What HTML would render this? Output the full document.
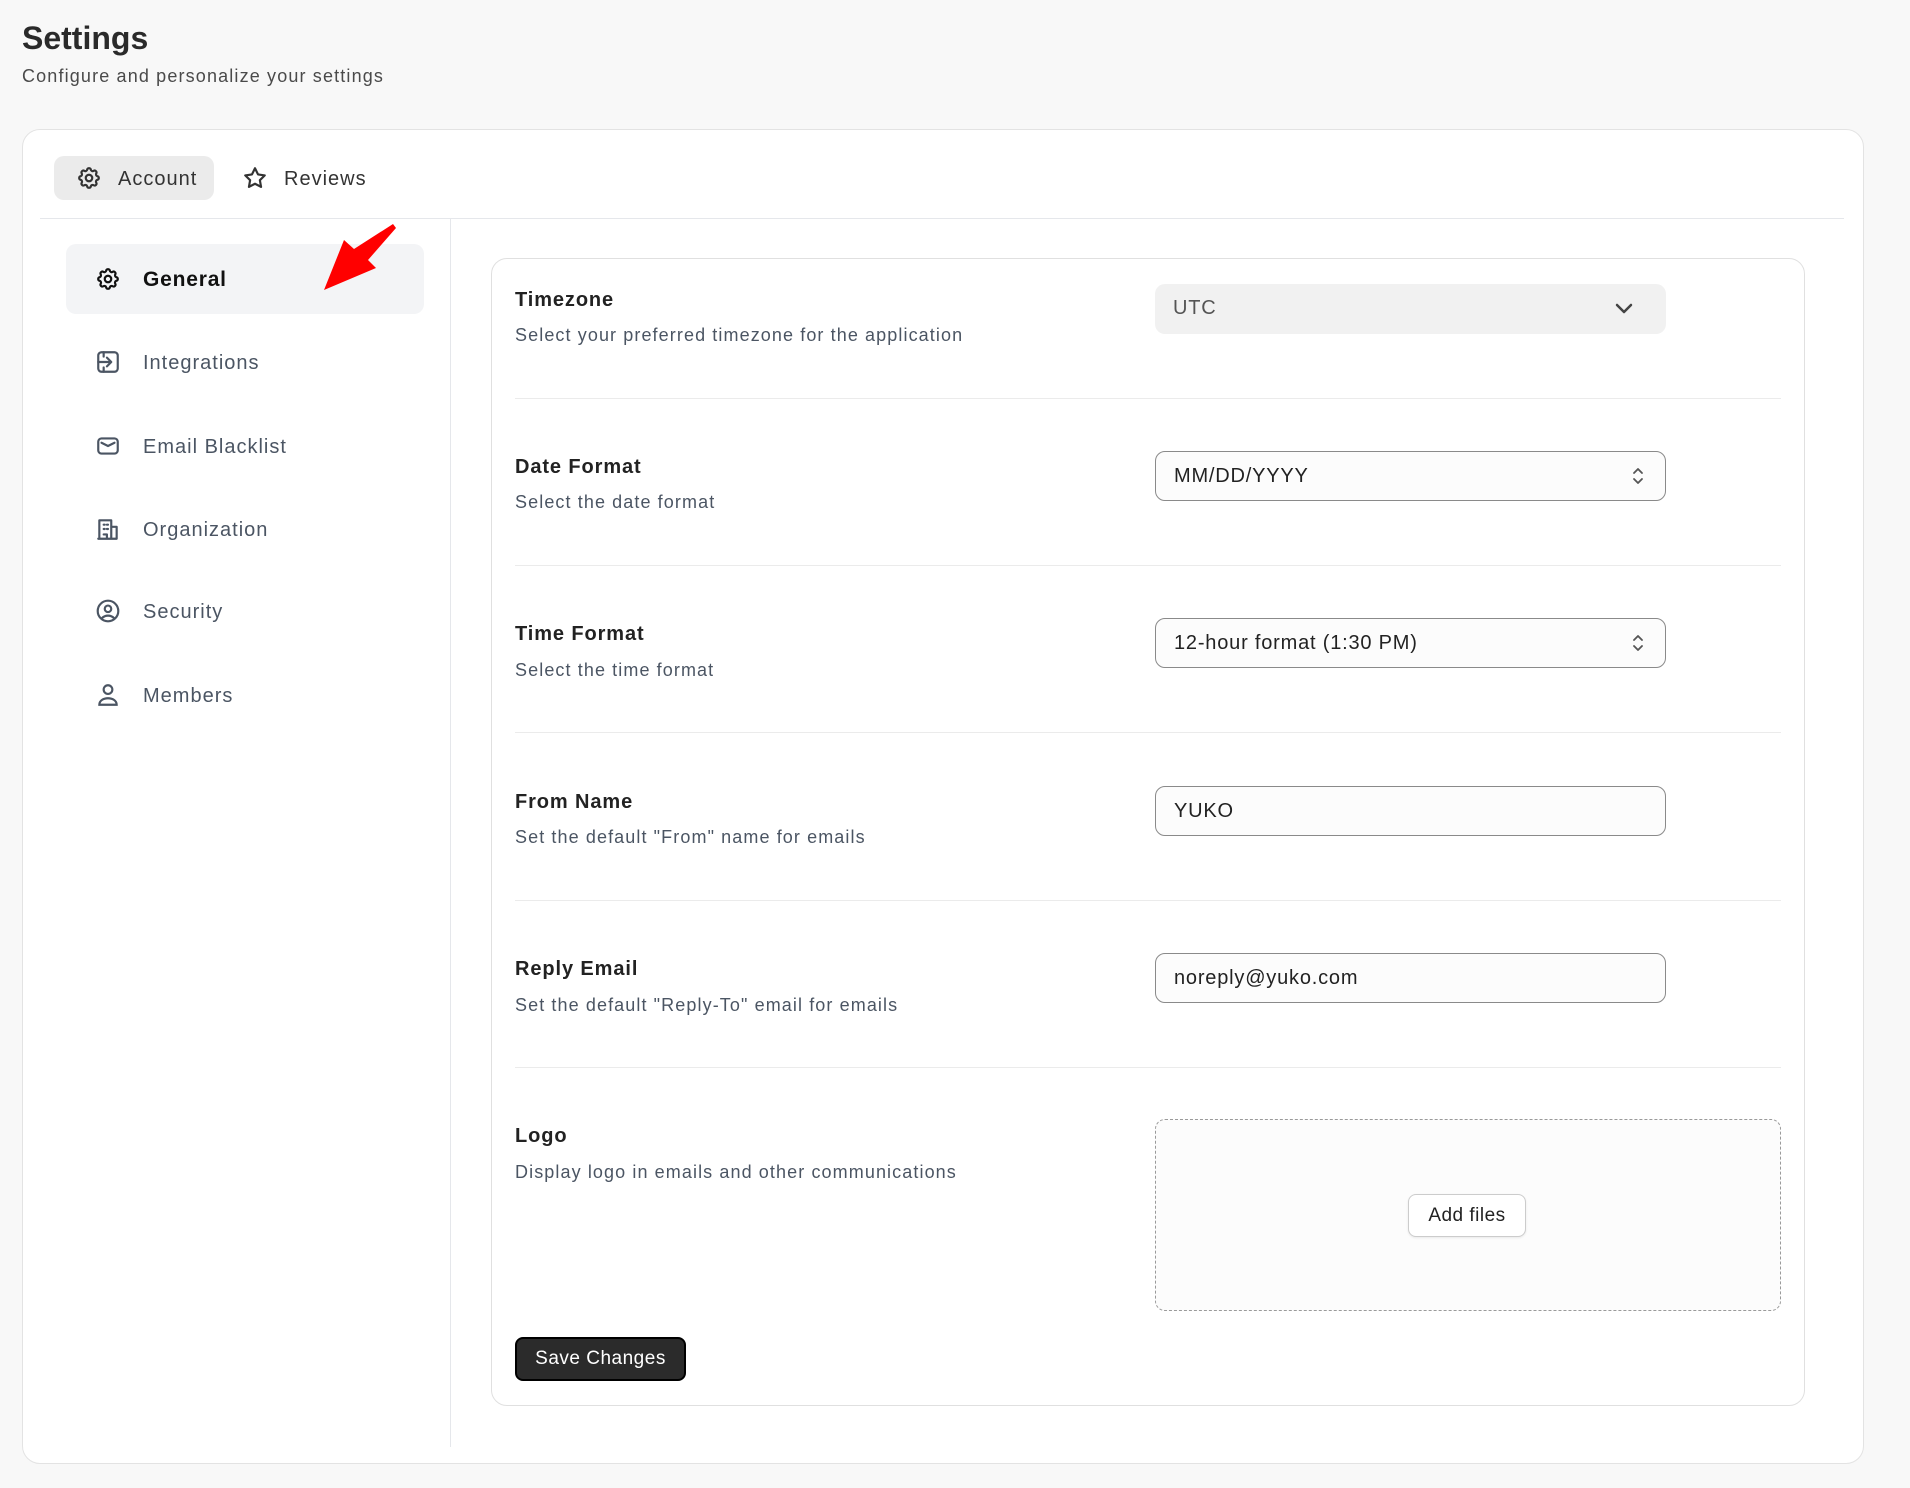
<!DOCTYPE html>
<html><head><meta charset="utf-8"><style>
*{box-sizing:border-box;margin:0;padding:0}
body{width:1910px;height:1488px;background:#f8f8f8;font-family:"Liberation Sans",sans-serif;position:relative;overflow:hidden;color:#1f2937}
.a{position:absolute}
.card{left:22px;top:129px;width:1842px;height:1335px;background:#fff;border:1px solid #e3e3e3;border-radius:18px}
.lbl{font-weight:bold;font-size:20px;color:#222;left:515px;letter-spacing:0.9px}
.desc{font-size:18px;color:#4b5563;left:515px;letter-spacing:1.1px}
.div{left:515px;width:1266px;height:1px;background:#ebebeb}
.inp{left:1155px;width:511px;height:50px;border:1px solid #8a8a8a;border-radius:10px;background:#fcfcfc;font-size:20px;color:#222;padding:13px 0 0 18px;letter-spacing:0.8px}
.nav{left:143px;font-size:20px;color:#4b5563;letter-spacing:1px}
.ic{left:95px}
</style></head><body>
<div class="a" style="left:22px;top:20px;font-size:32px;font-weight:bold;color:#2a2a2a">Settings</div>
<div class="a" style="left:22px;top:66px;font-size:18px;color:#4a4a4a;letter-spacing:1.15px">Configure and personalize your settings</div>
<div class="a card"></div>
<div class="a" style="left:54px;top:156px;width:160px;height:44px;background:#ebebeb;border-radius:10px"></div>
<svg class="a" style="left:76px;top:165px" width="26" height="26" viewBox="0 0 24 24" fill="none" stroke="#333" stroke-width="2" stroke-linejoin="round"><path d="M10.3 4.3c.4-1.8 3-1.8 3.4 0a1.7 1.7 0 0 0 2.6 1.1c1.5-.9 3.3.8 2.4 2.4a1.7 1.7 0 0 0 1 2.5c1.8.4 1.8 3 0 3.4a1.7 1.7 0 0 0-1 2.6c.9 1.5-.9 3.3-2.4 2.4a1.7 1.7 0 0 0-2.6 1c-.4 1.8-3 1.8-3.4 0a1.7 1.7 0 0 0-2.6-1c-1.5.9-3.3-.9-2.4-2.4a1.7 1.7 0 0 0-1-2.6c-1.8-.4-1.8-3 0-3.4a1.7 1.7 0 0 0 1-2.5c-.9-1.6.9-3.3 2.4-2.4a1.7 1.7 0 0 0 2.6-1.1z"/><circle cx="12" cy="12" r="3"/></svg>
<div class="a" style="left:118px;top:168px;font-size:20px;color:#333;letter-spacing:1px">Account</div>
<svg class="a" style="left:242px;top:165px" width="26" height="26" viewBox="0 0 24 24" fill="none" stroke="#333" stroke-width="2" stroke-linejoin="round"><path d="M12 3l2.8 5.7 6.2.9-4.5 4.4 1.1 6.2L12 17.3l-5.6 2.9 1.1-6.2L3 9.6l6.2-.9z"/></svg>
<div class="a" style="left:284px;top:168px;font-size:20px;color:#333;letter-spacing:1px">Reviews</div>
<div class="a" style="left:40px;top:218px;width:1804px;height:1px;background:#e5e7eb"></div>
<div class="a" style="left:450px;top:219px;width:1px;height:1228px;background:#e5e7eb"></div>

<div class="a" style="left:66px;top:244px;width:358px;height:70px;background:#f3f4f6;border-radius:10px"></div>
<svg class="a ic" style="top:266px" width="26" height="26" viewBox="0 0 24 24" fill="none" stroke="#111" stroke-width="2" stroke-linejoin="round"><path d="M10.3 4.3c.4-1.8 3-1.8 3.4 0a1.7 1.7 0 0 0 2.6 1.1c1.5-.9 3.3.8 2.4 2.4a1.7 1.7 0 0 0 1 2.5c1.8.4 1.8 3 0 3.4a1.7 1.7 0 0 0-1 2.6c.9 1.5-.9 3.3-2.4 2.4a1.7 1.7 0 0 0-2.6 1c-.4 1.8-3 1.8-3.4 0a1.7 1.7 0 0 0-2.6-1c-1.5.9-3.3-.9-2.4-2.4a1.7 1.7 0 0 0-1-2.6c-1.8-.4-1.8-3 0-3.4a1.7 1.7 0 0 0 1-2.5c-.9-1.6.9-3.3 2.4-2.4a1.7 1.7 0 0 0 2.6-1.1z"/><circle cx="12" cy="12" r="3"/></svg>
<div class="a" style="left:143px;top:268px;font-size:21px;font-weight:bold;color:#111;letter-spacing:0.8px">General</div>
<svg class="a" style="left:318px;top:222px" width="80" height="72" viewBox="0 0 80 72"><path d="M75 2 L78 6 L50 38 L58 46 L6 68 L26 18 L36 27 Z" fill="#f00"/></svg>

<svg class="a ic" style="top:349px" width="26" height="26" viewBox="0 0 24 24" fill="none" stroke="#4b5563" stroke-width="2" stroke-linecap="round" stroke-linejoin="round"><rect x="3" y="3" width="18" height="18" rx="3"/><path d="M3 12h11M11 8l4 4-4 4M8 3v4M8 17v4"/></svg>
<div class="a nav" style="top:352px">Integrations</div>
<svg class="a ic" style="top:433px" width="26" height="26" viewBox="0 0 24 24" fill="none" stroke="#4b5563" stroke-width="2" stroke-linecap="round" stroke-linejoin="round"><rect x="3" y="5" width="18" height="14" rx="3"/><path d="M6 9l6 3 6-3"/></svg>
<div class="a nav" style="top:436px">Email Blacklist</div>
<svg class="a ic" style="top:516px" width="26" height="26" viewBox="0 0 24 24" fill="none" stroke="#4b5563" stroke-width="2" stroke-linecap="round" stroke-linejoin="round"><path d="M4 21V4h11v17M15 10h5v11H3M8 8h1M11 8h1M8 12h1M11 12h1M8 17h3v4"/></svg>
<div class="a nav" style="top:519px">Organization</div>
<svg class="a ic" style="top:598px" width="26" height="26" viewBox="0 0 24 24" fill="none" stroke="#4b5563" stroke-width="2" stroke-linecap="round"><circle cx="12" cy="12" r="9.5"/><circle cx="12" cy="10" r="3"/><path d="M6.5 18.5c3-3 8-3 11 0"/></svg>
<div class="a nav" style="top:601px">Security</div>
<svg class="a ic" style="top:682px" width="26" height="26" viewBox="0 0 24 24" fill="none" stroke="#4b5563" stroke-width="2" stroke-linecap="round"><circle cx="12" cy="7" r="4"/><path d="M4 21c0-4 4-6 8-6s8 2 8 6z"/></svg>
<div class="a nav" style="top:685px">Members</div>

<div class="a" style="left:491px;top:258px;width:1314px;height:1148px;border:1px solid #e0e0e0;border-radius:16px;background:#fff"></div>

<div class="a lbl" style="top:289px">Timezone</div>
<div class="a desc" style="top:325px">Select your preferred timezone for the application</div>
<div class="a inp" style="top:284px;border:none;background:#f1f1f1;color:#555">UTC</div>
<svg class="a" style="left:1612px;top:299px" width="24" height="20" viewBox="0 0 24 20" fill="none" stroke="#444" stroke-width="2.5" stroke-linecap="round" stroke-linejoin="round"><path d="M5 6l7 7 7-7"/></svg>
<div class="a div" style="top:398px"></div>

<div class="a lbl" style="top:456px">Date Format</div>
<div class="a desc" style="top:492px">Select the date format</div>
<div class="a inp" style="top:451px">MM/DD/YYYY</div>
<svg class="a" style="left:1630px;top:463px" width="16" height="26" viewBox="0 0 16 26" fill="none" stroke="#555" stroke-width="1.8" stroke-linecap="round" stroke-linejoin="round"><path d="M4 10l4-4 4 4M4 16l4 4 4-4"/></svg>
<div class="a div" style="top:565px"></div>

<div class="a lbl" style="top:623px">Time Format</div>
<div class="a desc" style="top:660px">Select the time format</div>
<div class="a inp" style="top:618px">12-hour format (1:30 PM)</div>
<svg class="a" style="left:1630px;top:630px" width="16" height="26" viewBox="0 0 16 26" fill="none" stroke="#555" stroke-width="1.8" stroke-linecap="round" stroke-linejoin="round"><path d="M4 10l4-4 4 4M4 16l4 4 4-4"/></svg>
<div class="a div" style="top:732px"></div>

<div class="a lbl" style="top:791px">From Name</div>
<div class="a desc" style="top:827px">Set the default "From" name for emails</div>
<div class="a inp" style="top:786px">YUKO</div>
<div class="a div" style="top:900px"></div>

<div class="a lbl" style="top:958px">Reply Email</div>
<div class="a desc" style="top:995px">Set the default "Reply-To" email for emails</div>
<div class="a inp" style="top:953px">noreply@yuko.com</div>
<div class="a div" style="top:1067px"></div>

<div class="a lbl" style="top:1125px">Logo</div>
<div class="a desc" style="top:1162px">Display logo in emails and other communications</div>
<div class="a" style="left:1155px;top:1119px;width:626px;height:192px;border:1px dashed #9a9a9a;border-radius:10px;background:#fcfcfc"></div>
<div class="a" style="left:1408px;top:1194px;width:118px;height:43px;border:1px solid #ccc;border-radius:8px;background:#fff;font-size:19px;color:#222;text-align:center;line-height:41px;box-shadow:0 1px 2px rgba(0,0,0,.08);letter-spacing:0.5px">Add files</div>

<div class="a" style="left:515px;top:1337px;width:171px;height:44px;background:#2b2b2b;border:2px solid #000;border-radius:8px;color:#fff;font-size:19px;text-align:center;line-height:40px;letter-spacing:0.5px">Save Changes</div>
</body></html>
